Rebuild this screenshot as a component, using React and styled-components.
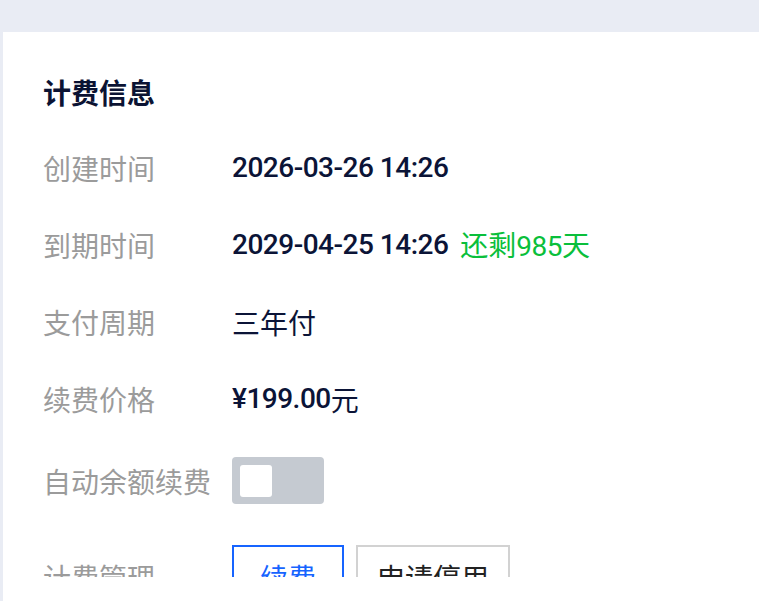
import React from 'react'
import styled, { createGlobalStyle } from 'styled-components'

const GlobalStyle = createGlobalStyle`
  html, body {
    margin: 0;
    padding: 0;
    background: #e9ecf4;
    font-family: 'Noto Sans CJK SC', 'Noto Sans', sans-serif;
  }
`

const Page = styled.div`
  box-sizing: border-box;
  height: 100vh;
  padding: 32px 0 0 3px;
  overflow: hidden;
`

const Card = styled.div`
  box-sizing: border-box;
  height: 100%;
  background: #fff;
  padding: 0 40px 24px;
`

const Body = styled.div`
  box-sizing: border-box;
  height: 545px;
  padding-top: 40px;
  overflow: hidden;
`

const Title = styled.h2`
  margin: 0 0 36px;
  font-size: 28px;
  line-height: 40px;
  height: 40px;
  font-weight: 700;
  color: #0b1333;
`

const Row = styled.div`
  display: flex;
  align-items: center;
  min-height: 40px;
  margin-top: ${p => p.gap || 37}px;
  &:first-of-type {
    margin-top: 0;
  }
`

const Label = styled.div`
  flex-shrink: 0;
  width: 189px;
  height: 40px;
  font-size: 28px;
  line-height: 40px;
  color: #9b9b9b;
`

const Value = styled.div`
  display: flex;
  align-items: center;
  height: 40px;
  font-size: 28px;
  line-height: 40px;
  color: #0b1437;
`

const Num = styled.span`
  font-family: 'Roboto', 'Noto Sans CJK SC', sans-serif;
  font-weight: ${p => (p.light ? 400 : 500)};
  letter-spacing: -0.5px;
`

const Remain = styled.span`
  margin-left: 12px;
  color: #0abf3b;
`

const Switch = styled.div`
  box-sizing: border-box;
  width: 92px;
  height: 47px;
  padding: 8px;
  border-radius: 4px;
  background: #c5cad1;
`

const Knob = styled.div`
  width: 32px;
  height: 32px;
  border-radius: 3px;
  background: #fff;
`

const Actions = styled.div`
  display: flex;
  gap: 12px;
`

const Button = styled.button`
  box-sizing: border-box;
  width: ${p => p.w}px;
  height: 64px;
  padding: 0;
  background: #fff;
  border: 2px solid ${p => (p.primary ? '#1664ff' : '#d2d2d2')};
  color: ${p => (p.primary ? '#1664ff' : '#222')};
  font-family: inherit;
  font-size: 28px;
  line-height: 40px;
  cursor: pointer;
`

export default function App () {
  return (
    <Page>
      <GlobalStyle />
      <Card>
        <Body>
          <Title>计费信息</Title>
          <Row>
            <Label>创建时间</Label>
            <Value><Num>2026-03-26 14:26</Num></Value>
          </Row>
          <Row>
            <Label>到期时间</Label>
            <Value>
              <Num>2029-04-25 14:26</Num>
              <Remain>还剩<Num light>985</Num>天</Remain>
            </Value>
          </Row>
          <Row>
            <Label>支付周期</Label>
            <Value>三年付</Value>
          </Row>
          <Row>
            <Label>续费价格</Label>
            <Value><Num>¥199.00</Num>元</Value>
          </Row>
          <Row gap={38}>
            <Label>自动余额续费</Label>
            <Switch><Knob /></Switch>
          </Row>
          <Row gap={41}>
            <Label>计费管理</Label>
            <Actions>
              <Button primary w={112}>续费</Button>
              <Button w={154}>申请停用</Button>
            </Actions>
          </Row>
        </Body>
      </Card>
    </Page>
  )
}
